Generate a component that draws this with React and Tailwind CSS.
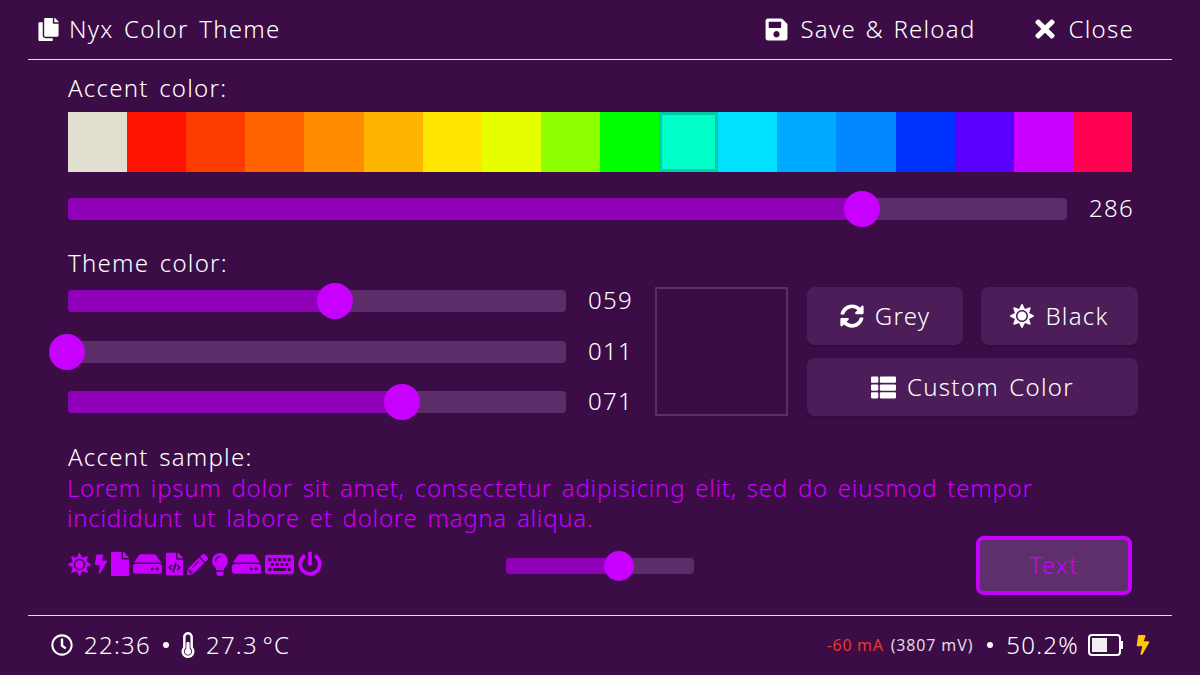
import React from "react";
import { FaCopy, FaSave, FaTimes, FaSyncAlt, FaSun, FaBolt, FaFile, FaHdd, FaFileCode, FaPencilAlt, FaLightbulb, FaKeyboard, FaPowerOff, FaThList, FaRegClock, FaThermometerHalf } from "react-icons/fa";

const swatches = ["#e2dfd0","#ff1400","#ff3c00","#ff6400","#ff8c00","#ffb400","#ffe600","#e6ff00","#8cff00","#00ff00","#00ffc8","#00e1ff","#00aaff","#0087ff","#0032ff","#5a00ff","#c800ff","#ff0050"];

function Slider({ pct, w, h = "h-[22px]", thumb = "w-9 h-9" }) {
  return (
    <div className={`relative shrink-0 ${h} ${w} rounded bg-[#5c2d68]`}>
      <div className="h-full rounded bg-[#9000b8]" style={{ width: `${Math.max(pct, 0)}%` }} />
      <div className={`absolute top-1/2 -translate-x-1/2 -translate-y-1/2 rounded-full bg-[#c800ff] ${thumb}`} style={{ left: `${pct}%` }} />
    </div>
  );
}

function Btn({ w, icon, children }) {
  return (
    <div className={`${w} h-[58px] shrink-0 rounded-lg bg-[#4c1d58] flex items-center justify-center gap-[11px] shadow-[0_2px_0_#350b3f]`}>
      {icon}
      <span className="-mt-[1px]">{children}</span>
    </div>
  );
}

function Dot() {
  return <span className="w-[6px] h-[6px] rounded-full bg-white shrink-0" />;
}

export default function App() {
  return (
    <div className="w-[1200px] h-[675px] bg-[#3b0c46] text-white px-[28px] flex flex-col overflow-hidden text-[24px] font-light tracking-[1.25px] [word-spacing:3px] font-['Noto_Sans',sans-serif]">
      <header className="h-[60px] shrink-0 border-b border-[#e6dce8] flex items-center pl-[9px] pr-[38px] pb-[1px]">
        <FaCopy className="text-[23px] mr-[9px] shrink-0" />
        <span className="-mt-[1px]">Nyx Color Theme</span>
        <span className="flex-1" />
        <FaSave className="text-[25px] mr-[11px]" />
        <span className="-mt-[1px] [word-spacing:2px]">Save &amp; Reload</span>
        <FaTimes className="text-[28px] ml-[55px] mr-[10px]" />
        <span className="-mt-[1px]">Close</span>
      </header>

      <main className="flex-1 pl-[40px] pr-[40px] flex flex-col">
        <div className="h-[52px] pt-[11px] leading-[34px]">Accent color:</div>
        <div className="flex h-[60px] shrink-0">
          {swatches.map((c, i) => (
            <div key={c} className={`flex-1 h-full ${i === 10 ? "shadow-[inset_0_0_0_3px_#00cca4]" : ""}`} style={{ backgroundColor: c }} />
          ))}
        </div>
        <div className="flex items-center mt-[26px] h-[22px]">
          <Slider pct={79.5} w="w-[999px]" />
          <span className="ml-[22px] -mt-[2px]">286</span>
        </div>
        <div className="h-[34px] mt-[26px] leading-[34px]">Theme color:</div>
        <div className="flex mt-[7px] h-[129px]">
          <div className="w-[587px] shrink-0 flex flex-col justify-between py-[3px]">
            {[[53.7, "059"], [-0.2, "011"], [67.1, "071"]].map(([p, v]) => (
              <div key={v} className="flex items-center h-[22px]">
                <Slider pct={p} w="w-[498px]" />
                <span className="ml-[22px] -mt-[2px]">{v}</span>
              </div>
            ))}
          </div>
          <div className="w-[133px] h-[129px] shrink-0 border-2 border-[#5c2d68]" />
          <div className="ml-[19px] flex flex-col justify-between w-[331px] shrink-0">
            <div className="flex justify-between">
              <Btn w="w-[156px]" icon={<FaSyncAlt className="text-[24px]" />}>Grey</Btn>
              <Btn w="w-[157px]" icon={<FaSun className="text-[24px]" />}>Black</Btn>
            </div>
            <Btn w="w-[331px]" icon={<FaThList className="text-[25px]" />}>Custom Color</Btn>
          </div>
        </div>
        <div className="h-[34px] mt-[24px] leading-[34px]">Accent sample:</div>
        <div className="text-[#c800ff] -ml-[1px] leading-[30px] -mt-[1px] tracking-[0.73px] whitespace-nowrap">
          Lorem ipsum dolor sit amet, consectetur adipisicing elit, sed do eiusmod tempor<br />incididunt ut labore et dolore magna aliqua.
        </div>
        <div className="flex items-center h-[60px] mt-[3px]">
          <div className="w-[438px] shrink-0 flex items-center gap-[4px] text-[#c800ff] mb-[4px]">
            <FaSun className="w-[23px] h-[23px]" />
            <FaBolt className="w-[12px] h-[20px]" />
            <FaFile className="w-[18px] h-[24px]" />
            <FaHdd className="w-[29px] h-[26px]" />
            <FaFileCode className="w-[17px] h-[24px]" />
            <FaPencilAlt className="w-[21px] h-[21px]" />
            <FaLightbulb className="w-[16px] h-[23px]" />
            <FaHdd className="w-[29px] h-[26px]" />
            <FaKeyboard className="w-[29px] h-[27px]" />
            <FaPowerOff className="w-[24px] h-[24px]" />
          </div>
          <Slider pct={60} w="w-[188px]" h="h-[16px]" thumb="w-[30px] h-[30px]" />
          <div className="ml-auto w-[156px] h-[59px] rounded-lg border-[4px] border-[#c800ff] bg-[#5f2f6b] text-[#c800ff] flex items-center justify-center mb-[2px]">Text</div>
        </div>
      </main>

      <footer className="h-[60px] shrink-0 border-t border-[#e6dce8] flex items-center pl-[23px] pr-[19px] pb-[1px]">
        <FaRegClock className="text-[22px] mr-[11px]" />
        <span className="-mt-[1px]">22:36</span>
        <span className="w-[12px]" />
        <Dot />
        <span className="w-[6px]" />
        <FaThermometerHalf className="text-[26px] mr-[5px]" />
        <span className="-mt-[1px] [word-spacing:-3px]">27.3 °C</span>
        <span className="flex-1" />
        <span className="text-[16px] font-normal text-[#e8372c] mr-[7px] [word-spacing:0px] tracking-[0.7px]">-60 mA</span>
        <span className="text-[16px] font-normal text-[#e0d8e4] [word-spacing:0px] tracking-[0.85px]">(3807 mV)</span>
        <span className="w-[14px]" />
        <Dot />
        <span className="w-[13px]" />
        <span className="-mt-[1px]">50.2%</span>
        <svg className="ml-[9px]" width="36" height="22" viewBox="0 0 36 22" fill="none">
          <rect x="1" y="1" width="31" height="20" rx="3" stroke="#fff" strokeWidth="2" />
          <rect x="4" y="4" width="15" height="14" fill="#f0f0f0" />
          <rect x="33" y="7" width="2" height="8" fill="#fff" />
        </svg>
        <FaBolt className="text-[20px] text-[#ffc800] ml-[9px]" />
      </footer>
    </div>
  );
}
